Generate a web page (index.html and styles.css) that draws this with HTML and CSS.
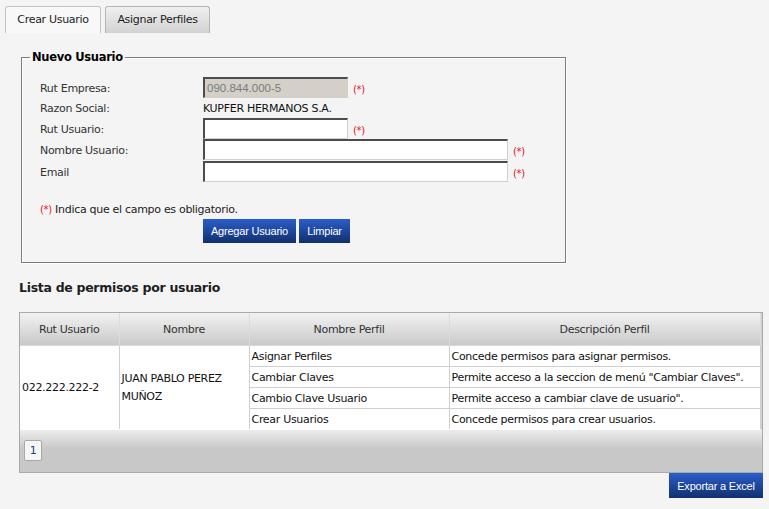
FILE: index.html
```html
<!DOCTYPE html>
<html lang="es">
<head>
<meta charset="utf-8">
<title>Crear Usuario</title>
<link rel="stylesheet" href="styles.css">
</head>
<body>
<div class="tabs">
  <div class="tab tab-active">Crear Usuario</div>
  <div class="tab tab-profiles">Asignar Perfiles</div>
</div>

<fieldset class="box">
  <legend class="box-title">Nuevo Usuario</legend>
  <div class="form">
    <div class="row">
      <span class="label">Rut Empresa:</span>
      <input class="field field-short field-disabled" type="text" value="090.844.000-5" disabled>
      <span class="req">(*)</span>
    </div>
    <div class="row row-text">
      <span class="label">Razon Social:</span>
      <span class="value">KUPFER HERMANOS S.A.</span>
    </div>
    <div class="row">
      <span class="label">Rut Usuario:</span>
      <input class="field field-short" type="text">
      <span class="req">(*)</span>
    </div>
    <div class="row">
      <span class="label">Nombre Usuario:</span>
      <input class="field field-long" type="text">
      <span class="req">(*)</span>
    </div>
    <div class="row row-gap">
      <span class="label">Email</span>
      <input class="field field-long" type="text">
      <span class="req">(*)</span>
    </div>
  </div>
  <p class="note"><span class="req-inline">(*)</span> Indica que el campo es obligatorio.</p>
  <div class="actions">
    <button class="btn btn-add" type="button">Agregar Usuario</button>
    <button class="btn btn-clear" type="button">Limpiar</button>
  </div>
</fieldset>

<h2 class="section-title">Lista de permisos por usuario</h2>

<div class="grid-wrap">
  <div class="grid">
    <table class="perm">
      <colgroup>
        <col class="c1"><col class="c2"><col class="c3"><col class="c4">
      </colgroup>
      <thead>
        <tr>
          <th>Rut Usuario</th>
          <th>Nombre</th>
          <th>Nombre Perfil</th>
          <th>Descripción Perfil</th>
        </tr>
      </thead>
      <tbody>
        <tr>
          <td rowspan="4" class="cell-rut">022.222.222-2</td>
          <td rowspan="4" class="cell-name">JUAN PABLO PEREZ MUÑOZ</td>
          <td>Asignar Perfiles</td>
          <td>Concede permisos para asignar permisos.</td>
        </tr>
        <tr>
          <td>Cambiar Claves</td>
          <td>Permite acceso a la seccion de menú "Cambiar Claves".</td>
        </tr>
        <tr>
          <td>Cambio Clave Usuario</td>
          <td>Permite acceso a cambiar clave de usuario".</td>
        </tr>
        <tr>
          <td>Crear Usuarios</td>
          <td>Concede permisos para crear usuarios.</td>
        </tr>
      </tbody>
    </table>
    <div class="pager">
      <span class="page">1</span>
    </div>
  </div>
  <div class="export-row">
    <button class="btn btn-export" type="button">Exportar a Excel</button>
  </div>
</div>
</body>
</html>
```

FILE: styles.css
```css
html, body {
  margin: 0;
  padding: 0;
  background: #f4f4f4;
}

body {
  font-family: "DejaVu Sans", Verdana, sans-serif;
  font-size: 11px;
  letter-spacing: -0.3px;
  color: #222;
}

/* Tabs */
.tabs {
  display: flex;
  gap: 4px;
  padding: 6px 0 0 5px;
}

.tab {
  box-sizing: border-box;
  width: 105px;
  height: 27px;
  line-height: 26px;
  padding: 0;
  text-align: center;
  border: 1px solid #b4b4b4;
  border-bottom: none;
  border-radius: 3px 3px 0 0;
  background: linear-gradient(#f0f0f0, #d2d2d2);
  color: #222;
  font-size: 11px;
}

.tab-active {
  width: 96px;
  background: #f8f8f8;
  border-color: #c4c4c4;
}

/* Fieldset */
.box {
  box-sizing: border-box;
  width: 545px;
  margin: 17px 0 0 21px;
  padding: 0 16px 19px 18px;
  border: 1px solid #7c7c7c;
  box-shadow: 1px 1px 0 #fff, inset 1px 1px 0 #fff;
}

.box-title {
  margin-left: -10px;
  padding: 0 2px;
  font-weight: bold;
  font-size: 11.5px;
  line-height: 14px;
  color: #000;
}

.form {
  padding-top: 13px;
}

.row {
  display: flex;
  align-items: center;
  height: 21px;
}

.row-text {
  height: 20px;
}

.row-gap {
  margin-top: 1px;
}

.label {
  width: 163px;
  flex: none;
  color: #333;
  padding-top: 2px;
}

.row-text .label {
  padding-top: 0;
}

.value {
  color: #111;
}

.field {
  box-sizing: border-box;
  height: 21px;
  margin: 0;
  padding: 0 2px;
  border-style: solid;
  border-width: 2px 1px 1px 2px;
  border-color: #4c4c4c #d4d0c8 #d4d0c8 #4c4c4c;
  background: #fff;
  font-family: "Liberation Sans", Arial, sans-serif;
  font-size: 11.5px;
  letter-spacing: 0;
}

.field-short {
  width: 145px;
}

.field-long {
  width: 305px;
}

.field-disabled {
  background: #d4d0c8;
  color: #7a7a7a;
}

.req {
  margin-left: 5px;
  color: #e8102a;
  font-size: 10px;
  padding-top: 4px;
}

.req-inline {
  color: #e8102a;
  font-size: 10px;
}

.note {
  margin: 21px 0 0;
  line-height: 14px;
}

.actions {
  display: flex;
  gap: 3px;
  margin: 2px 0 0 163px;
}

.btn {
  box-sizing: border-box;
  height: 24px;
  margin: 0;
  padding: 0;
  border: none;
  background: linear-gradient(#2b5dcb, #11306d);
  color: #fff;
  font-family: "Liberation Sans", Arial, sans-serif;
  font-size: 11px;
  letter-spacing: -0.2px;
  white-space: nowrap;
  text-align: center;
}

.btn-add {
  width: 93px;
}

.btn-clear {
  width: 51px;
}

/* List */
.section-title {
  margin: 17px 0 0 19px;
  font-size: 12.5px;
  line-height: 16px;
  font-weight: bold;
  color: #1e1e1e;
}

.grid-wrap {
  width: 744px;
  margin: 16px 0 0 19px;
}

.grid {
  box-sizing: border-box;
  border: 1px solid #a9a9a9;
  background: #d0d0d0;
}

.perm {
  width: 740px;
  border-collapse: collapse;
  table-layout: fixed;
  background: #fff;
  border-right: 1px solid #c8c8c8;
}

.c1 { width: 99px; }
.c2 { width: 130px; }
.c3 { width: 200px; }
.c4 { width: 311px; }

.perm th {
  height: 32px;
  padding: 0;
  font-weight: normal;
  color: #333;
  background: linear-gradient(#f2f2f2, #c9c9c9);
  border-right: 1px solid #dcdcdc;
  border-bottom: 1px solid #d8d8d8;
  text-align: center;
}

.perm td {
  height: 20px;
  padding: 0 2px;
  border: 1px solid #cfcfcf;
  border-top: none;
  white-space: nowrap;
  color: #111;
}

.perm td.cell-rut,
.perm td.cell-name {
  vertical-align: middle;
  border-left: none;
  border-bottom-color: #fff;
}

.perm td.cell-name {
  white-space: normal;
  line-height: 18px;
}

.perm tbody tr:last-child td {
  border-bottom-color: #fff;
}

.pager {
  height: 42px;
  box-sizing: border-box;
  padding: 10px 0 0 4px;
  background: linear-gradient(#ececec, #c8c8c8 45%, #c8c8c8);
}

.page {
  display: inline-block;
  box-sizing: border-box;
  width: 18px;
  height: 21px;
  line-height: 19px;
  text-align: center;
  border: 1px solid #a8a8a8;
  border-radius: 2px;
  background: #f6f6f6;
  color: #1d3f78;
}

.export-row {
  display: flex;
  justify-content: flex-end;
}

.btn-export {
  width: 94px;
  height: 25px;
}
```
